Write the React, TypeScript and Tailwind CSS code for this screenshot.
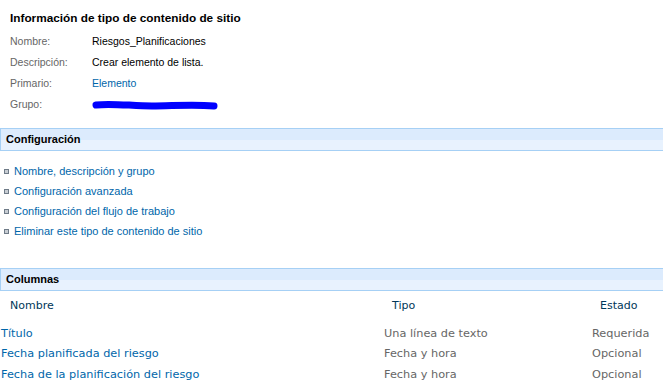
const tahoma = { fontFamily: '"Liberation Sans", Arial, sans-serif' };
const verdana = { fontFamily: '"DejaVu Sans", Verdana, sans-serif' };

const info = [
  { label: "Nombre:", value: "Riesgos_Planificaciones" },
  { label: "Descripción:", value: "Crear elemento de lista." },
  { label: "Primario:", value: "Elemento", link: true },
];

const settings = [
  "Nombre, descripción y grupo",
  "Configuración avanzada",
  "Configuración del flujo de trabajo",
  "Eliminar este tipo de contenido de sitio",
];

const columns = [
  { name: "Título", type: "Una línea de texto", status: "Requerida" },
  { name: "Fecha planificada del riesgo", type: "Fecha y hora", status: "Opcional" },
  { name: "Fecha de la planificación del riesgo", type: "Fecha y hora", status: "Opcional" },
];

function SectionHeader({ title }: { title: string }) {
  return (
    <div className="h-[23px] border-y border-l border-[#a6d0f5] bg-[#dcebfd] relative">
      <div className="absolute left-0 right-0 bottom-0 h-[10px] bg-[#e8f2fe]" />
      <div className="relative pl-[5px] pt-[4px] text-[11px] font-bold text-black leading-[13px]" style={tahoma}>
        {title}
      </div>
    </div>
  );
}

export default function App() {
  return (
    <div className="w-[663px] h-[391px] bg-white overflow-hidden" style={tahoma}>
      <div className="pl-[10px] pt-[11px]">
        <h1 className="text-[11.8px] font-bold text-black leading-[14px]">
          Información de tipo de contenido de sitio
        </h1>
        <div className="mt-[6px] flex flex-col">
          {info.map((row) => (
            <div key={row.label} className="flex h-[21px] items-center text-[10.5px]">
              <span className="w-[82px] text-[#666666]">{row.label}</span>
              <span className={row.link ? "text-[#0066aa]" : "text-black"}>{row.value}</span>
            </div>
          ))}
          <div className="flex h-[21px] items-center text-[10.5px]">
            <span className="w-[82px] text-[#666666]">Grupo:</span>
            <svg width="130" height="10" viewBox="0 0 130 10">
              <path
                d="M4 5 C 20 3, 40 6, 60 6 S 100 4, 122 6"
                stroke="#0000ff"
                strokeWidth="7"
                strokeLinecap="round"
                fill="none"
              />
            </svg>
          </div>
        </div>
      </div>

      <div className="mt-[13px]">
        <SectionHeader title="Configuración" />
      </div>

      <ul className="mt-[10px] flex flex-col">
        {settings.map((s) => (
          <li key={s} className="flex h-[20px] items-center text-[11px] text-[#0066aa]">
            <span className="ml-[4px] mr-[5px] h-[5px] w-[5px] border border-[#6f7b88] bg-[#c8cdd3]" />
            {s}
          </li>
        ))}
      </ul>

      <div className="mt-[27px]">
        <SectionHeader title="Columnas" />
      </div>

      <div>
        <div className="flex h-[30px] items-center text-[#003759] text-[11px]" style={verdana}>
          <span className="w-[392px] pl-[10px]">Nombre</span>
          <span className="w-[208px]">Tipo</span>
          <span>Estado</span>
        </div>
        <div className="mt-[3px] flex flex-col">
          {columns.map((c) => (
            <div key={c.name} className="flex h-[20.5px] items-center text-[11.3px]" style={verdana}>
              <span className="w-[384px] pl-[1px] text-[#0066aa]">{c.name}</span>
              <span className="w-[208px] text-[#666666]">{c.type}</span>
              <span className="text-[#666666]">{c.status}</span>
            </div>
          ))}
        </div>
      </div>
    </div>
  );
}
